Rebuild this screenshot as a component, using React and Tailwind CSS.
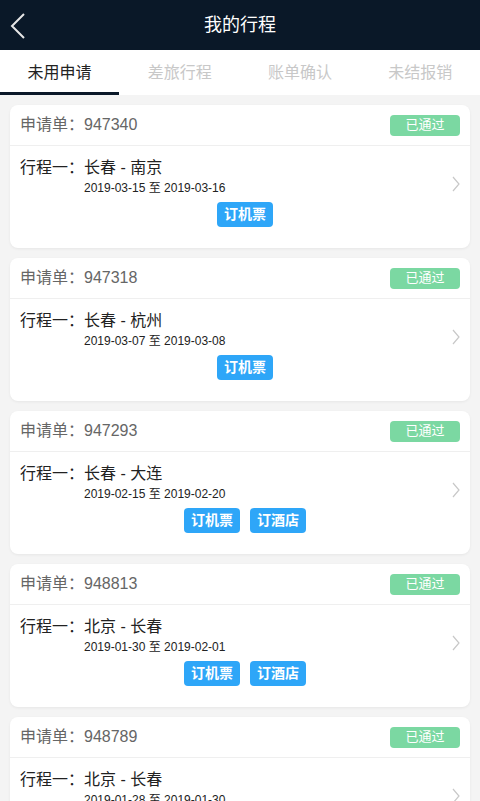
import React from 'react';

const trips = [
  { id: '947340', route: '长春 - 南京', date: '2019-03-15 至 2019-03-16', hotel: false },
  { id: '947318', route: '长春 - 杭州', date: '2019-03-07 至 2019-03-08', hotel: false },
  { id: '947293', route: '长春 - 大连', date: '2019-02-15 至 2019-02-20', hotel: true },
  { id: '948813', route: '北京 - 长春', date: '2019-01-30 至 2019-02-01', hotel: true },
  { id: '948789', route: '北京 - 长春', date: '2019-01-28 至 2019-01-30', hotel: false },
];

const tabs = ['未用申请', '差旅行程', '账单确认', '未结报销'];

const TripCard = ({ trip }) => (
  <div className="bg-white rounded-lg shadow-[0_1px_3px_rgba(0,0,0,0.06)] shrink-0">
    <div className="h-[41px] flex items-center justify-between pl-[10px] pr-[10px] border-b border-[#efefef]">
      <span className="text-[16px] text-[#666]">申请单：{trip.id}</span>
      <span className="w-[70px] h-[21px] rounded bg-[#7bd8a2] text-white text-[13px] flex items-center justify-center">已通过</span>
    </div>
    <div className="h-[102px] pl-[10px] relative">
      <div className="pt-[12px] flex">
        <span className="text-[16px] text-[#222] leading-[20px] w-[64px]">行程一：</span>
        <div>
          <div className="text-[16px] text-[#222] leading-[20px]">{trip.route}</div>
          <div className="text-[12px] text-[#222] leading-[18px] mt-[1px]">{trip.date}</div>
        </div>
      </div>
      <div className="flex justify-center gap-[10px] mt-[5px]">
        <button className="w-[56px] h-[25px] rounded bg-[#2ea6f8] text-white text-[14px] font-bold">订机票</button>
        {trip.hotel && (
          <button className="w-[56px] h-[25px] rounded bg-[#2ea6f8] text-white text-[14px] font-bold">订酒店</button>
        )}
      </div>
      <svg className="absolute right-[10px] top-[30px]" width="8" height="16" viewBox="0 0 8 16">
        <path d="M1 1 L7 8 L1 15" fill="none" stroke="#c8c8c8" strokeWidth="1.2" />
      </svg>
    </div>
  </div>
);

export default function App() {
  return (
    <div className="w-[480px] h-[801px] overflow-hidden bg-[#f4f4f4] flex flex-col" style={{ fontFamily: '"Liberation Sans", "Noto Sans CJK SC", sans-serif' }}>
      <div className="h-[50px] bg-[#0a1828] flex items-center justify-center relative shrink-0">
        <svg className="absolute left-[10px] top-[13px]" width="16" height="26" viewBox="0 0 16 26">
          <path d="M14 1 L2 13 L14 25" fill="none" stroke="#e6e6e6" strokeWidth="2" />
        </svg>
        <span className="text-white text-[18px]">我的行程</span>
      </div>
      <div className="h-[45px] bg-white flex shrink-0">
        {tabs.map((t, i) => (
          <div
            key={t}
            className={`flex-1 flex items-center justify-center text-[16px] ${i > 0 ? 'border-l border-[#e8e8e8]' : ''} ${i === 0 ? 'text-[#222] border-b-[3px] border-[#0a1828] pt-[3px]' : 'text-[#c8c8c8] border-b-[3px] border-transparent pt-[3px]'}`}
          >
            {t}
          </div>
        ))}
      </div>
      <div className="flex flex-col gap-[10px] px-[10px] pt-[10px]">
        {trips.map((trip) => (
          <TripCard key={trip.id} trip={trip} />
        ))}
      </div>
    </div>
  );
}
